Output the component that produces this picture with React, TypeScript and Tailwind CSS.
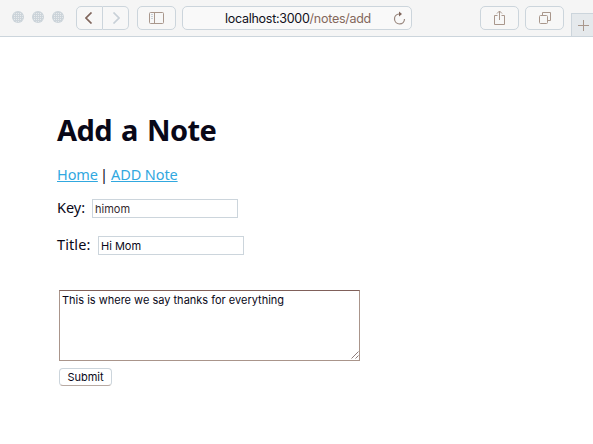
import React from "react";

const toolButton =
  "flex h-6 items-center justify-center border border-[#ccd5dc] bg-[#f7f7f7]";

function TrafficDot() {
  return (
    <svg width="12" height="12" viewBox="0 0 12 12">
      <defs>
        <pattern id="dither" width="2" height="2" patternUnits="userSpaceOnUse">
          <rect width="2" height="2" fill="#ccd4da" />
          <rect width="1" height="1" fill="#e8ebed" />
        </pattern>
      </defs>
      <circle cx="6" cy="6" r="6" fill="#ccd4da" />
      <circle cx="6" cy="6" r="5" fill="url(#dither)" />
    </svg>
  );
}

function Toolbar() {
  return (
    <header className="flex h-[37px] shrink-0 border-b border-[#ccd5dc] bg-[#f5f5f5] pl-3">
      <div className="mt-[11px] flex h-3 w-16 gap-2">
        <TrafficDot />
        <TrafficDot />
        <TrafficDot />
      </div>
      <div className="mt-1.5 flex">
        <button className={`${toolButton} w-[27px] rounded-l-[5px]`}>
          <svg className="-ml-0.5" width="8" height="12" viewBox="0 0 8 12" fill="none" stroke="#80665c" strokeWidth="1.7">
            <path d="M6.5 .5 1 6l5.5 5.5" />
          </svg>
        </button>
        <button className={`${toolButton} w-[26px] rounded-r-[5px] border-l-0`}>
          <svg width="8" height="12" viewBox="0 0 8 12" fill="none" stroke="#c8d0d7" strokeWidth="1.7">
            <path d="m1.5 .5 5.5 5.5-5.5 5.5" />
          </svg>
        </button>
      </div>
      <button className={`${toolButton} mt-1.5 ml-2 w-[39px] rounded-[5px]`}>
        <svg width="15" height="12" viewBox="0 0 15 12" fill="none" stroke="#a9978c">
          <rect x=".5" y=".5" width="14" height="11" rx="1" />
          <path d="M5.5 .5v11" />
          <path d="M2 2.5h2M2 4.5h2M2 6.5h2" stroke="#c8d0d7" />
        </svg>
      </button>
      <div className="mt-1.5 ml-1.5 flex h-6 w-[230px] items-center rounded-[5px] border border-[#ccd5dc] bg-[#f9f9f9]">
        <div className="mt-0.5 ml-[42px] w-[168px] whitespace-nowrap font-['Inter',sans-serif] text-[12.5px] leading-[22px] tracking-[-0.27px] text-[#101020]">
          localhost:3000<span className="text-[#84675c]">/notes/add</span>
        </div>
        <svg className="-mt-px" width="13" height="14" viewBox="0 0 13 14" fill="none" stroke="#99877e" strokeWidth="1.2">
          <path d="M7 3H6a5 5 0 1 0 5.5 5" />
          <path d="M6 .5 9 3 6 5.5z" fill="#80665c" stroke="none" />
        </svg>
      </div>
      <button className={`${toolButton} mt-1.5 ml-[68px] w-[39px] rounded-[5px]`}>
        <svg className="-mt-px" width="11" height="16" viewBox="0 0 11 16" fill="none" stroke="#a9978c">
          <path d="M3.5 5.5h-3v9h10v-9h-3M5.5 10V1M3 3.5 5.5 1 8 3.5" />
        </svg>
      </button>
      <button className={`${toolButton} mt-1.5 ml-1.5 w-[39px] rounded-[5px]`}>
        <svg width="12" height="12" viewBox="0 0 12 12" fill="none" stroke="#a9978c">
          <rect x=".5" y="3.5" width="8" height="8" rx="1" />
          <path d="M3.5 3.5v-3h8v8h-3" />
        </svg>
      </button>
      <button className="mt-[13px] ml-[7px] flex h-[23px] w-[22px] items-center justify-center border-t border-l border-[#ccd5dc] bg-[#e5e9ec]">
        <svg className="ml-0.5" width="11" height="11" viewBox="0 0 11 11" stroke="#a9978c">
          <path d="M5.5 0v11M0 5.5h11" />
        </svg>
      </button>
    </header>
  );
}

export default function App() {
  return (
    <div className="flex h-[444px] w-[593px] flex-col overflow-hidden bg-white font-['Noto_Sans',sans-serif] text-[#090818]">
      <Toolbar />
      <main className="flex flex-col items-start pt-[73px] pl-[57px]">
        <h1 className="h-10 whitespace-nowrap text-[29px] leading-10 font-bold tracking-[-0.55px] [word-spacing:2px]">Add a Note</h1>
        <p className="mt-3 flex h-6 whitespace-nowrap text-[14.5px] leading-6 tracking-[-0.1px]">
          <a className="w-10 text-[#31a8df] underline underline-offset-1">Home</a>
          <span className="w-3.5 text-center">|</span>
          <a className="text-[#31a8df] underline underline-offset-1">ADD Note</a>
        </p>
        <label className="mt-[13px] flex h-[19px] items-center text-[14.5px]">
          <span className="-mt-px w-[35px]">Key:</span>
          <input
            className="h-[19px] w-[146px] border border-[#ccd5dc] px-[2px] pt-px font-['Inter',sans-serif] text-[11px] text-[#352a30] outline-none"
            defaultValue="himom"
            spellCheck={false}
          />
        </label>
        <label className="mt-[18px] flex h-[19px] items-center text-[14.5px]">
          <span className="-mt-px w-[41px] tracking-[0.1px]">Title:</span>
          <input
            className="h-[19px] w-[146px] border border-[#ccd5dc] px-[2px] pt-px font-['Inter',sans-serif] text-[11px] outline-none"
            defaultValue="Hi Mom"
            spellCheck={false}
          />
        </label>
        <div className="mt-[35px] ml-0.5 flex h-[71px] w-[301px] items-end border border-[#aa958b] border-t-[#80605a]">
          <textarea
            className="h-full w-[291px] resize-none overflow-hidden whitespace-nowrap px-[2px] pt-[2px] font-['Inter',sans-serif] text-[11px] leading-[14px] outline-none"
            defaultValue="This is where we say thanks for everything"
            spellCheck={false}
          />
          <svg className="mb-px" width="8" height="8" viewBox="0 0 8 8" stroke="#705a58" strokeWidth=".8">
            <path d="M.5 7.5l7-7M4.5 7.5l3-3" />
          </svg>
        </div>
        <button className="mt-[7px] ml-0.5 h-[18px] w-[53px] rounded-[4px] border border-[#ccd5dc] border-b-[#b8aaa3] font-['Inter',sans-serif] text-[11px] leading-4">
          Submit
        </button>
      </main>
    </div>
  );
}
